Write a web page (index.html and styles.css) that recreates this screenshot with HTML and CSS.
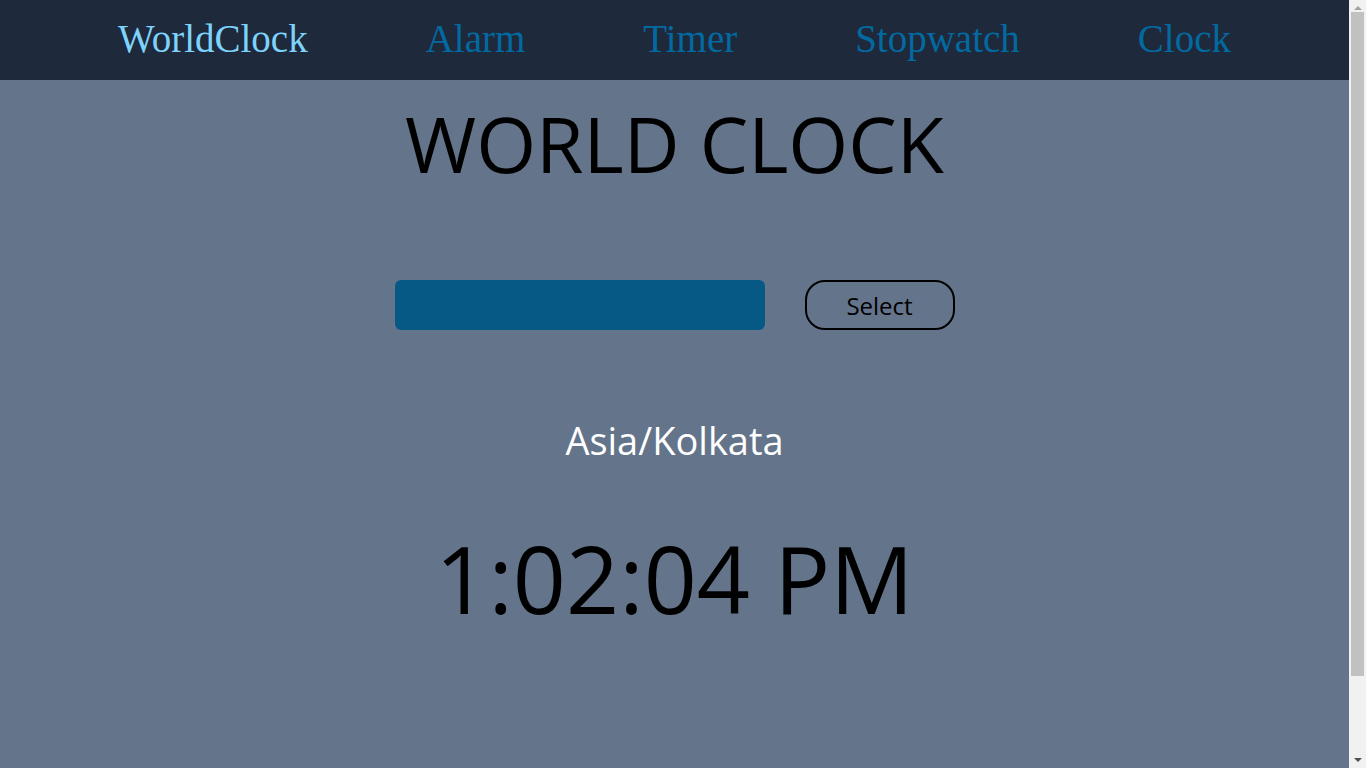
FILE: index.html
```html
<!DOCTYPE html>
<html lang="en">
<head>
<meta charset="utf-8">
<title>World Clock</title>
<link rel="stylesheet" href="styles.css">
</head>
<body>
<nav class="nav">
  <a class="nav-link active" href="#">WorldClock</a>
  <a class="nav-link" href="#">Alarm</a>
  <a class="nav-link" href="#">Timer</a>
  <a class="nav-link" href="#">Stopwatch</a>
  <a class="nav-link" href="#">Clock</a>
</nav>
<main class="main">
  <h1 class="title">WORLD CLOCK</h1>
  <div class="picker">
    <input class="zone-input" type="text" aria-label="Time zone">
    <button class="select-btn" type="button">Select</button>
  </div>
  <div class="zone">Asia/Kolkata</div>
  <div class="time">1:02:04 PM</div>
</main>
<div class="scrollbar" aria-hidden="true">
  <span class="sb-arrow sb-up"></span>
  <span class="sb-thumb"></span>
  <span class="sb-arrow sb-down"></span>
</div>
</body>
</html>
```
FILE: styles.css
```css
html, body {
  margin: 0;
  padding: 0;
}
html {
  background: #f1f1f1;
}
body {
  margin-right: 17px;
  background: #64748b;
  font-family: "Open Sans", "Noto Sans", sans-serif;
  color: #000;
}
.nav {
  height: 80px;
  box-sizing: border-box;
  padding-bottom: 3px;
  background: #1e293b;
  display: flex;
  justify-content: space-evenly;
  align-items: center;
}
.nav-link {
  font-family: "Liberation Serif", "Times New Roman", serif;
  font-size: 39px;
  line-height: 1;
  color: #0369a1;
  text-decoration: none;
}
.nav-link.active {
  color: #7dd3fc;
}
.main {
  display: flex;
  flex-direction: column;
  align-items: center;
  padding-bottom: 222px;
}
.title {
  margin: 25px 0 0;
  font-size: 77px;
  font-weight: 400;
  line-height: 1;
}
.picker {
  margin-top: 98px;
  display: flex;
  gap: 40px;
}
.zone-input {
  width: 370px;
  height: 50px;
  box-sizing: border-box;
  border: none;
  border-radius: 6px;
  background: #075985;
  padding: 0 12px;
  font: inherit;
  color: #fff;
}
.select-btn {
  width: 150px;
  height: 50px;
  box-sizing: border-box;
  border: 2px solid #000;
  border-radius: 20px;
  background: transparent;
  font-family: inherit;
  font-size: 24px;
  color: #000;
  padding: 0;
}
.zone {
  margin-top: 91px;
  font-size: 38px;
  line-height: 1;
  color: #fff;
}
.time {
  margin-top: 73px;
  font-size: 93px;
  line-height: 1;
}
.scrollbar {
  position: fixed;
  top: 0;
  right: 0;
  width: 17px;
  height: 100vh;
  background: #f1f1f1;
  display: flex;
  flex-direction: column;
  align-items: center;
}
.sb-arrow {
  width: 0;
  height: 0;
  border-left: 4px solid transparent;
  border-right: 4px solid transparent;
}
.sb-up {
  margin-top: 6px;
  border-bottom: 4px solid #a3a3a3;
}
.sb-down {
  margin-top: auto;
  margin-bottom: 6px;
  border-top: 4px solid #505050;
}
.sb-thumb {
  margin-top: 2px;
  width: 13px;
  height: 664px;
  background: #c1c1c1;
}
```
